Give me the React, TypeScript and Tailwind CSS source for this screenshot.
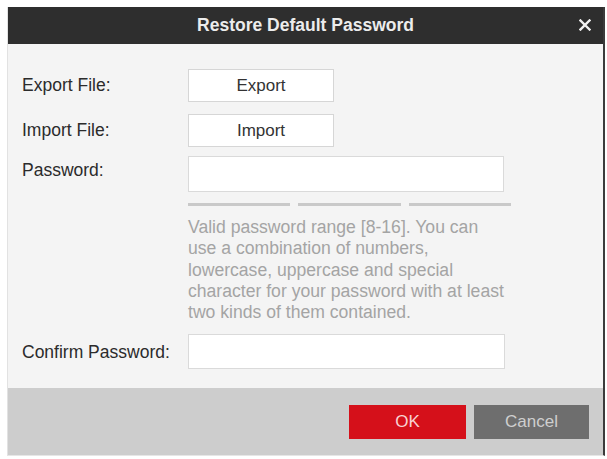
import { useState } from "react";

const font = { fontFamily: '"Liberation Sans", Arial, sans-serif' };

function CloseIcon() {
	return (
		<svg width="12" height="12" viewBox="0 0 12 12" aria-hidden="true">
			<path d="M1.5 1.5 L10.5 10.5 M10.5 1.5 L1.5 10.5" stroke="#f2f2f2" strokeWidth="2.4" strokeLinecap="square" />
		</svg>
	);
}

function FieldLabel({ children, className = "" }: { children: React.ReactNode; className?: string }) {
	return <div className={`w-[166px] shrink-0 text-[17.5px] text-[#2b2b2b] ${className}`}>{children}</div>;
}

export default function App() {
	const [password, setPassword] = useState("");
	const [confirm, setConfirm] = useState("");

	return (
		<div className="min-h-screen bg-white pt-[7px] pl-[7px]" style={font}>
			<div className="w-[598px] border-l border-[#e2e2e2] border-r-2 border-r-[#3b3b3b] border-b border-b-[#e6e6e6]">
				{/* title bar */}
				<div className="relative flex h-[37px] items-center justify-center bg-[#2e2e2e]">
					<span className="text-[17.5px] font-bold text-[#ececec]">Restore Default Password</span>
					<button className="absolute right-[11px] top-[11px] flex h-[14px] w-[14px] items-center justify-center">
						<CloseIcon />
					</button>
				</div>

				{/* form */}
				<div className="bg-[#f4f4f4] pl-[14px] pt-[25px] pb-[19px]">
					<div className="flex items-center">
						<FieldLabel>Export File:</FieldLabel>
						<button className="h-[33px] w-[146px] border border-[#d6d6d6] bg-white text-[17px] text-[#333]">Export</button>
					</div>

					<div className="mt-[12px] flex items-center">
						<FieldLabel>Import File:</FieldLabel>
						<button className="h-[33px] w-[146px] border border-[#d6d6d6] bg-white text-[17px] text-[#333]">Import</button>
					</div>

					<div className="mt-[9px] flex">
						<FieldLabel className="pt-[1px]">Password:</FieldLabel>
						<div className="flex flex-col">
							<input
								type="password"
								value={password}
								onChange={(e) => setPassword(e.target.value)}
								className="h-[36px] w-[316px] border border-[#dadada] bg-white px-2 outline-none"
							/>
							<div className="mt-[11px] flex w-[323px] gap-[8px]">
								<div className="h-[3px] flex-1 bg-[#c9c9c9]" />
								<div className="h-[3px] flex-1 bg-[#c9c9c9]" />
								<div className="h-[3px] flex-1 bg-[#c9c9c9]" />
							</div>
							<p className="mt-[11px] whitespace-nowrap text-[17.6px] leading-[21.3px] text-[#a4a4a4]">
								Valid password range [8-16]. You can
								<br />
								use a combination of numbers,
								<br />
								lowercase, uppercase and special
								<br />
								character for your password with at least
								<br />
								two kinds of them contained.
							</p>
						</div>
					</div>

					<div className="mt-[11px] flex items-center">
						<FieldLabel>Confirm Password:</FieldLabel>
						<input
							type="password"
							value={confirm}
							onChange={(e) => setConfirm(e.target.value)}
							className="h-[35px] w-[317px] border border-[#dadada] bg-white px-2 outline-none"
						/>
					</div>
				</div>

				{/* footer */}
				<div className="flex h-[67px] items-center justify-end gap-[8px] bg-[#cdcdcd] pr-[14px]">
					<button className="h-[34px] w-[117px] bg-[#d5101a] text-[17px] text-[#f8d2d2]">OK</button>
					<button className="h-[34px] w-[115px] bg-[#6e6e6e] text-[17px] text-[#cfcfcf]">Cancel</button>
				</div>
			</div>
		</div>
	);
}
